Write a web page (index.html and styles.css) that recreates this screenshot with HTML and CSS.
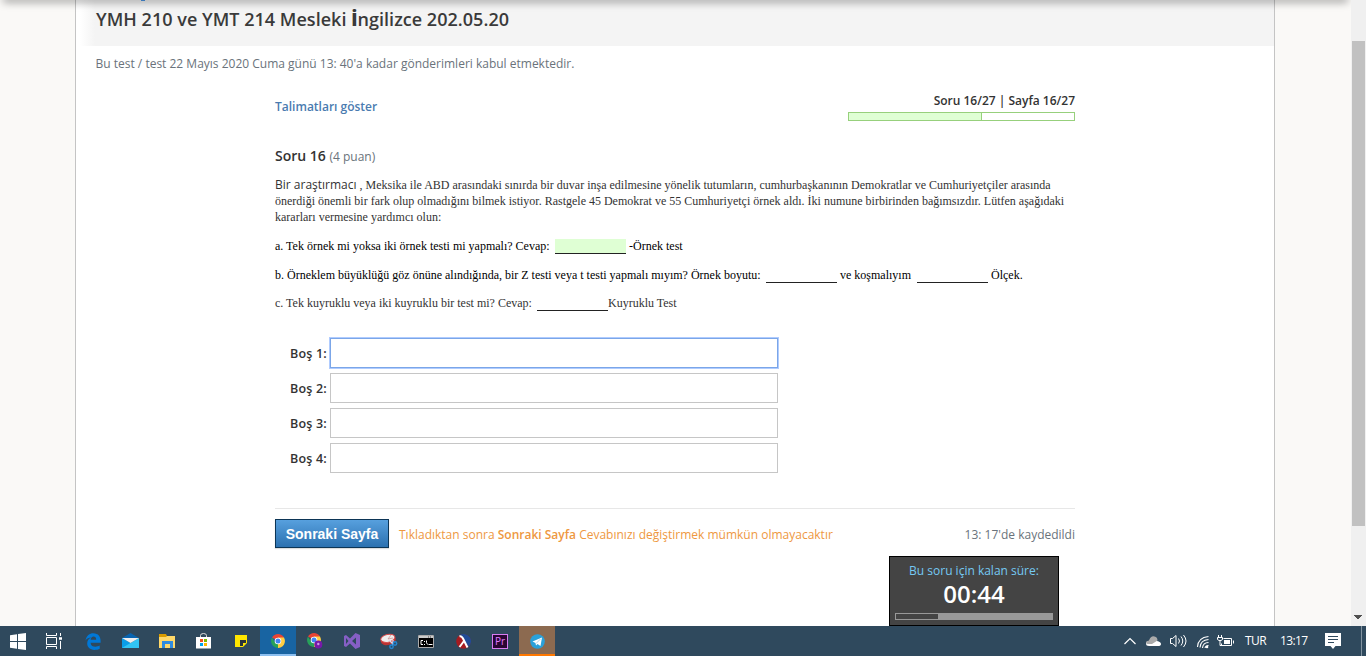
FILE: index.html
```html
<!DOCTYPE html>
<html lang="tr">
<head>
<meta charset="utf-8">
<title>YMH 210 ve YMT 214 Mesleki İngilizce</title>
<link rel="stylesheet" href="styles.css">
</head>
<body>
<div class="browser">
  <div class="viewport">
    <div class="top-shadow"><i class="link-tail"></i></div>
    <main class="sheet">
      <header class="title-bar"><h1>YMH 210 ve YMT 214 Mesleki <b>İ</b>ngilizce 202.05.20</h1></header>
      <p class="deadline">Bu test / test 22 Mayıs 2020 Cuma günü 13: 40'a kadar gönderimleri kabul etmektedir.</p>
      <div class="quiz">
        <div class="quiz-head">
          <a class="instructions">Talimatları göster</a>
          <div class="progress-box">
            <div class="progress-label">Soru 16/27 | Sayfa 16/27</div>
            <div class="progress"><div class="progress-fill"></div></div>
          </div>
        </div>
        <h2 class="question-title">Soru 16 <span class="points">(4 puan)</span></h2>
        <div class="question">
          <div class="intro">
            <div class="l1"><span class="lead">Bir araştırmacı</span> , Meksika ile ABD arasındaki sınırda bir duvar inşa edilmesine yönelik tutumların, cumhurbaşkanının Demokratlar ve Cumhuriyetçiler arasında</div>
            <div class="l2">önerdiği önemli bir fark olup olmadığını bilmek istiyor. Rastgele 45 Demokrat ve 55 Cumhuriyetçi örnek aldı. İki numune birbirinden bağımsızdır. Lütfen aşağıdaki</div>
            <div class="l3">kararları vermesine yardımcı olun:</div>
          </div>
          <div class="item item-a"><span class="ta">a. Tek örnek mi yoksa iki örnek testi mi yapmalı? Cevap:</span><i class="blank current"></i><span class="ta2">-Örnek test</span></div>
          <div class="item item-b"><span class="tb">b. Örneklem büyüklüğü göz önüne alındığında, bir Z testi veya t testi yapmalı mıyım? Örnek boyutu:</span><i class="blank"></i><span class="tb2">ve koşmalıyım</span><i class="blank"></i><span class="tb3">Ölçek.</span></div>
          <div class="item item-c"><span class="tc">c. Tek kuyruklu veya iki kuyruklu bir test mi? Cevap:</span><i class="blank"></i><span class="tc2">Kuyruklu Test</span></div>
        </div>
        <div class="answers">
          <div class="answer"><label>Boş 1:</label><div class="field focused"></div></div>
          <div class="answer"><label>Boş 2:</label><div class="field"></div></div>
          <div class="answer"><label>Boş 3:</label><div class="field"></div></div>
          <div class="answer"><label>Boş 4:</label><div class="field"></div></div>
        </div>
        <div class="actions">
          <button class="next">Sonraki Sayfa</button>
          <span class="warning">Tıkladıktan sonra <b>Sonraki Sayfa</b> Cevabınızı değiştirmek mümkün olmayacaktır</span>
          <span class="saved">13: 17'de kaydedildi</span>
        </div>
      </div>
    </main>
    <aside class="timer">
      <div class="timer-label">Bu soru için kalan süre:</div>
      <div class="timer-value">00:44</div>
      <div class="timer-bar"><div class="timer-fill"></div></div>
    </aside>
  </div>
  <div class="scrollbar"><div class="thumb"></div><svg width="9" height="5"><path d="M0 0h8v1h-1v1h-1v1h-1v1h-2v-1h-1v-1h-1v-1h-1z" fill="#505050"/></svg></div>
</div>
<footer class="taskbar">
  <div class="start"><svg width="17" height="17" viewBox="0 0 17 17"><path fill="#fff" d="M0 2.300 7 1.200V8H0zM8 1 16 0v8H8zM0 9h7v6.800L0 14.800zM8 9h8v8l-8-1z"/></svg></div>
  <div class="taskview"><svg width="18" height="18" viewBox="0 0 18 18" fill="none" stroke="#fff"><path d="M1.500 1v2.500h10V1M1.500 17v-2.500h10V17M1.500 5.500h10v7h-10zM15.500 1v3M15.500 9v8"/><path d="M14 6.500h3" stroke-width="2.500"/></svg></div>
  <div class="apps">
    <div class="app"><svg width="16" height="17" viewBox="0 0 16 17"><path fill="#0078d7" d="M.5 7.500C1.500 2.500 4.500.3 8.300.3c5 0 7.300 3.600 7.300 7.600v1.800H5.600c.2 3 2.300 4 4.800 4 1.700 0 3-.5 4.300-1.200v3.200c-1.500.8-3.100 1.200-5.300 1.200-4.500 0-7.200-2.700-7.200-6.300 0-2.800 1.500-5 4.100-6C3.900 4.700 2 5.500.5 7.500zm5.200-.8h5.500c0-2-1-3.100-2.600-3.100-1.700 0-2.700 1.300-2.900 3.100z"/></svg></div>
    <div class="app"><svg width="17" height="16" viewBox="0 0 17 16"><path fill="#0864b0" d="M0 5 8.500 0 17 5v3H0z"/><path fill="#0b9ee8" d="M0 5v10h17z"/><path fill="#32c5f4" d="M17 5v10H0z"/><path fill="#eee" d="M0 5h17L8.500 10z"/></svg></div>
    <div class="app"><svg width="17" height="14" viewBox="0 0 17 14"><path fill="#d99b00" d="M0 0h7l1 2h8v3H0z"/><path fill="#ffd869" d="M0 3h7l1-1h8v12H0z"/><path fill="#2f8bdf" d="M3 7h11v7h-3v-4H6v4H3z"/></svg></div>
    <div class="app"><svg width="16" height="16" viewBox="0 0 16 16"><path d="M4.500 5V2.500Q4.500.5 7.500.5t3 2V5" fill="none" stroke="#ddd"/><path fill="#fff" d="M0 4h15v11.500H0z"/><path fill="#f25022" d="M4 6h3v3H4z"/><path fill="#7fba00" d="M8 6h3v3H8z"/><path fill="#00a4ef" d="M4 10h3v3H4z"/><path fill="#ffb900" d="M8 10h3v3H8z"/></svg></div>
    <div class="app"><svg width="12" height="12"><path fill="#ffe600" d="M0 0h12v12H0z"/><path fill="#28323a" d="M5 5h6v3L8 11H5z"/><path fill="#ffe600" d="M8 8h4l-4 4z"/><path fill="#2f495d" d="M12 8v4H8z"/></svg></div>
    <div class="app chrome"><svg width="14" height="14" viewBox="0 0 14 14"><path fill="#e84435" d="M7 7 1 3.500A7 7 0 0 1 13 3.500z"/><path fill="#ffcd42" d="M7 7V3.500h6A7 7 0 0 1 7 14z"/><path fill="#27a15a" d="M7 7 7 14A7 7 0 0 1 1 3.500l3 5z"/><path fill="#ffcd42" d="m7 14 3-5V7H7z"/><circle cx="7" cy="7" r="3.300" fill="#fff"/><circle cx="7" cy="7" r="2.500" fill="#4285f4"/></svg></div>
    <div class="app"><svg width="16" height="16" viewBox="0 0 16 16"><path fill="#e84435" d="M7 7 1 3.500A7 7 0 0 1 13 3.500z"/><path fill="#ffcd42" d="M7 7V3.500h6A7 7 0 0 1 7 14z"/><path fill="#27a15a" d="M7 7 7 14A7 7 0 0 1 1 3.500l3 5z"/><circle cx="7" cy="7" r="3.300" fill="#fff"/><circle cx="7" cy="7" r="2.500" fill="#4285f4"/><circle cx="11.300" cy="11.500" r="4" fill="#7719aa"/><circle cx="11.300" cy="11" r="1.200" fill="#c99be5"/></svg></div>
    <div class="app"><svg width="16" height="16" viewBox="0 0 16 16"><path fill="#865fc5" fill-rule="evenodd" d="M11.500 0 16 2v12l-4.500 2L6 10.500 2 14l-2-1V3l2-1 4 3.500zM12 4.500 8 8l4 3.500zM2 5v6l2.500-3z"/></svg></div>
    <div class="app"><svg width="18" height="17" viewBox="0 0 18 17"><g transform="rotate(-12 8 6)"><ellipse cx="8" cy="7.300" rx="7.700" ry="4.700" fill="#bd3433"/><ellipse cx="8" cy="5.300" rx="7.200" ry="3.900" fill="#f1eeee" stroke="#d54a4a"/></g><path d="m8 6 3-4M8 6l5-1" stroke="#c88" stroke-width=".7"/><path d="m9 7 4 4M13 7v5" stroke="#dde" stroke-width="1.300"/><g fill="none" stroke="#2584cf" stroke-width="1.500"><circle cx="11.500" cy="13.800" r="1.700"/><circle cx="15" cy="10.500" r="1.700"/></g></svg></div>
    <div class="app"><svg width="16" height="13" viewBox="0 0 16 13"><path d="M.5.500h15v12H.5z" fill="#000" stroke="#aaa"/><path d="M1 1h14v2H1z" fill="#ccc"/><path d="M10 2h1m1 0h1" stroke="#444"/><path d="M5 5.500H3v4h2M6.500 6v1m0 2v1M8.500 5.500v2l1 2M10.500 9.500h4" fill="none" stroke="#fff"/></svg></div>
    <div class="app"><svg width="15" height="15" viewBox="0 0 15 15"><circle cx="7.500" cy="7.500" r="7.300" fill="#a51b20"/><path fill="#204b96" d="M4 1A7.300 7.300 0 0 1 12.500 12.800L8 6z"/><path d="M3.500 2.500q2-1 3.500 2l4.500 9M8 7 3.500 13" fill="none" stroke="#fff" stroke-width="2"/></svg></div>
    <div class="app"><span class="premiere">Pr</span></div>
    <div class="app telegram"><svg width="15" height="15" viewBox="0 0 15 15"><circle cx="7.500" cy="7.500" r="7.300" fill="#2aa1da"/><path fill="#fff" d="m2.500 7.500 9.500-4-1.500 8.500L7.500 10 6 11.500 5.500 9z"/><path d="M6 9.500 10.500 5" stroke="#aad4eb"/></svg></div>
  </div>
  <svg class="tray" width="110" height="18" viewBox="0 0 110 18" fill="none" stroke="#fff">
    <path d="M1.500 12 7 6.500 12.500 12" stroke-width="1.200"/>
    <path d="M26 14q-3 0-3-2.500T26 9q2-4 5.500-3 2 .5 2.500 3 4 1 4 3T35 14z" fill="#fff" stroke="none"/><path d="M26 12q-3 0-3-1.500T26 8.500q2-5 5.500-4 3 .5 3 4L29 12z" fill="#aaa" stroke="none"/>
    <path d="M47.500 6.500h2l3.500-3v11l-3.500-3h-2zM55.500 6.500q2 2.500 0 5M58 4.500q3.500 4.500 0 9M60.500 3q5 6 0 12"/>
    <path d="M74.500 15Q75 5.500 85.500 4.500M77 15.500q.5-7.500 8.500-8M79.500 16q.5-5.500 6-5.500M82 16q.5-2.500 3.500-2.500" stroke-width="1.100"/><circle cx="84" cy="15" r="1.300" fill="#fff" stroke="none"/>
    <path d="M100.500 6.500h8v7h-10v-2M110.500 8.500v3"/><path d="M101 8h6v4h-6z" fill="#fff" stroke="none"/><path d="M95.500 3v2M98.500 3v2M94.500 5.500h5v2l-1.500 1h-2l-1.500-1zM97 8v5.500h3"/>
  </svg>
  <span class="lang">TUR</span>
  <span class="clock">13:17</span>
  <svg class="notice" width="16" height="17" viewBox="0 0 16 17"><path fill="#fff" d="M0 0h16v13h-5.500L8 16l-2.500-3H0z"/><path d="M3 3.500h10M3 6.500h10M3 9.500h6" stroke="#2f495d"/></svg>
  <i class="peek"></i>
</footer>
</body>
</html>
```

FILE: styles.css
```css
* { box-sizing: border-box; }
body { margin: 0; width: 1366px; height: 656px; overflow: hidden; display: flex; flex-direction: column; font-family: "Open Sans", sans-serif; font-size: 13px; color: #333; background: #fff; }
h1, h2, p { margin: 0; font-weight: 400; }
.browser { display: flex; height: 626px; }
.viewport { position: relative; width: 1351px; background: #faf9f7; padding-left: 75px; overflow: hidden; }
.top-shadow { position: absolute; left: 4px; right: 4px; top: -4px; height: 4px; box-shadow: 0 1px 8px 1px rgba(0,0,0,.4); z-index: 2; }
.link-tail { position: absolute; left: 137px; top: 4px; width: 4px; height: 1px; background: #3d78b8; }
.sheet { width: 1200px; height: 626px; background: #fff; border: solid #c4c4c4; border-width: 0 1px; white-space: nowrap; }
.title-bar { height: 46px; padding-left: 20px; background: linear-gradient(90deg, #fff 4px, #f4f4f4 19px); }
.title-bar h1 { font-size: 18px; font-weight: 600; line-height: 24px; padding-top: 7px; color: #3a3a3a; letter-spacing: .03px; }
.deadline { padding-left: 19.500px; margin-top: 9px; line-height: 18px; font-size: 12px; color: #6a737b; }
.quiz { width: 800px; margin: 18px 0 0 199px; }
.quiz-head { display: flex; justify-content: space-between; height: 56px; }
.instructions { color: #4a7bb0; font-weight: 600; font-size: 12px; line-height: 18px; padding-top: 7px; }
.progress-box { width: 227px; text-align: right; }
.progress-label { font-size: 12px; font-weight: 600; line-height: 18px; padding-top: 1px; }
.progress { margin-top: 2px; height: 9px; border: 1px solid #97d07c; }
.progress-fill { width: 133px; height: 7px; background: #dfffd4; border-right: 1px solid #97d07c; }
.question-title { height: 30px; font-size: 14px; font-weight: 600; line-height: 18px; }
.points { font-size: 12px; font-weight: 400; color: #6a737b; }
.question { font: 12px/16px "Liberation Serif", serif; }
.lead { font: 12px/16px "Open Sans", sans-serif; }
.item { display: flex; height: 16px; }
.item-a { margin-top: 13px; color: #000; }
.item-b { margin-top: 13px; color: #000; }
.item-c { margin-top: 12px; }
.blank { width: 71px; height: 16px; border-bottom: 1px solid #222; flex: none; }
.item .current { height: 15px; margin-top: 1px; background: #dfffd4; }
.ta { width: 280px; }
.ta2 { padding-left: 3px; }
.tb { width: 491px; }
.tb2 { width: 80px; padding-left: 3px; }
.tb3 { padding-left: 3px; }
.tc { width: 262px; }
.answers { padding: 27px 0 0 15px; display: grid; gap: 5px; }
.answer { display: flex; align-items: center; height: 30px; }
.answer label { width: 40px; font-size: 12.500px; font-weight: 600; letter-spacing: .2px; }
.field { width: 448px; height: 30px; border: 1px solid #c6c6c6; }
.field.focused { border-color: #7ba6e8; box-shadow: 0 0 0 1px #b0ccff; }
.actions { display: flex; align-items: center; margin-top: 35px; border-top: 1px solid #e7e7e7; padding-top: 10px; }
.next { width: 114px; height: 29px; padding: 0; border: 1px solid #0c3556; background: linear-gradient(#57a0de, #2c71b0); color: #fff; font: bold 14px "Liberation Sans", sans-serif; box-shadow: 0 1px 1px #ddd; }
.warning { margin: 1px 0 0 10px; color: #ee983f; font-size: 12px; }
.warning b { font-weight: 600; }
.saved { margin: 1px 0 0 auto; font-size: 12px; color: #6a737b; }
.timer { position: absolute; left: 889px; top: 556px; width: 170px; height: 70px; border: 1px solid #000; background: #444; padding: 5px 5px 0; text-align: center; color: #fff; white-space: nowrap; }
.timer-label { font-size: 12px; line-height: 18px; color: #75c9f3; }
.timer-value { font-size: 24px; font-weight: 600; line-height: 28px; }
.timer-bar { margin-top: 5px; height: 7px; background: #999; padding: 1px; }
.timer-fill { width: 42px; height: 5px; background: #444; }
.scrollbar { width: 15px; background: #f0f0f0; padding: 41px 0 0 1px; display: flex; flex-direction: column; }
.thumb { width: 13px; height: 485px; background: #c1c1c1; margin-bottom: 89px; }
.scrollbar svg { margin-left: 2px; }
.taskbar { display: flex; align-items: center; height: 30px; background: #2f495d; color: #fff; font-size: 12px; }
.taskbar svg { display: block; flex: none; }
.start { width: 36px; display: flex; justify-content: center; }
.taskview { width: 39px; padding-left: 9px; }
.apps { display: flex; gap: 1px; }
.app { width: 36px; height: 30px; display: flex; align-items: center; justify-content: center; }
.chrome { background: #1864a2; border-bottom: 2px solid #8cbff0; padding-top: 2px; }
.telegram { background: #8c6a50; border-bottom: 2px solid #ff7800; padding-top: 2px; }
.premiere { width: 16px; height: 15px; border: 1px solid #d87cf2; background: #2a0634; color: #e07cff; font: 10px/13px "Open Sans", sans-serif; text-align: center; }
.taskbar .tray { margin-left: 568px; overflow: visible; }
.lang { margin-left: 12px; width: 35px; font-size: 12px; line-height: 16px; padding-bottom: 1px; letter-spacing: -.5px; }
.clock { width: 45px; font-size: 12px; line-height: 16px; padding-bottom: 1px; letter-spacing: -.6px; }
.notice { margin-top: 1px; }
.peek { margin-left: 20px; width: 1px; height: 30px; background: #8293a0; }
```
